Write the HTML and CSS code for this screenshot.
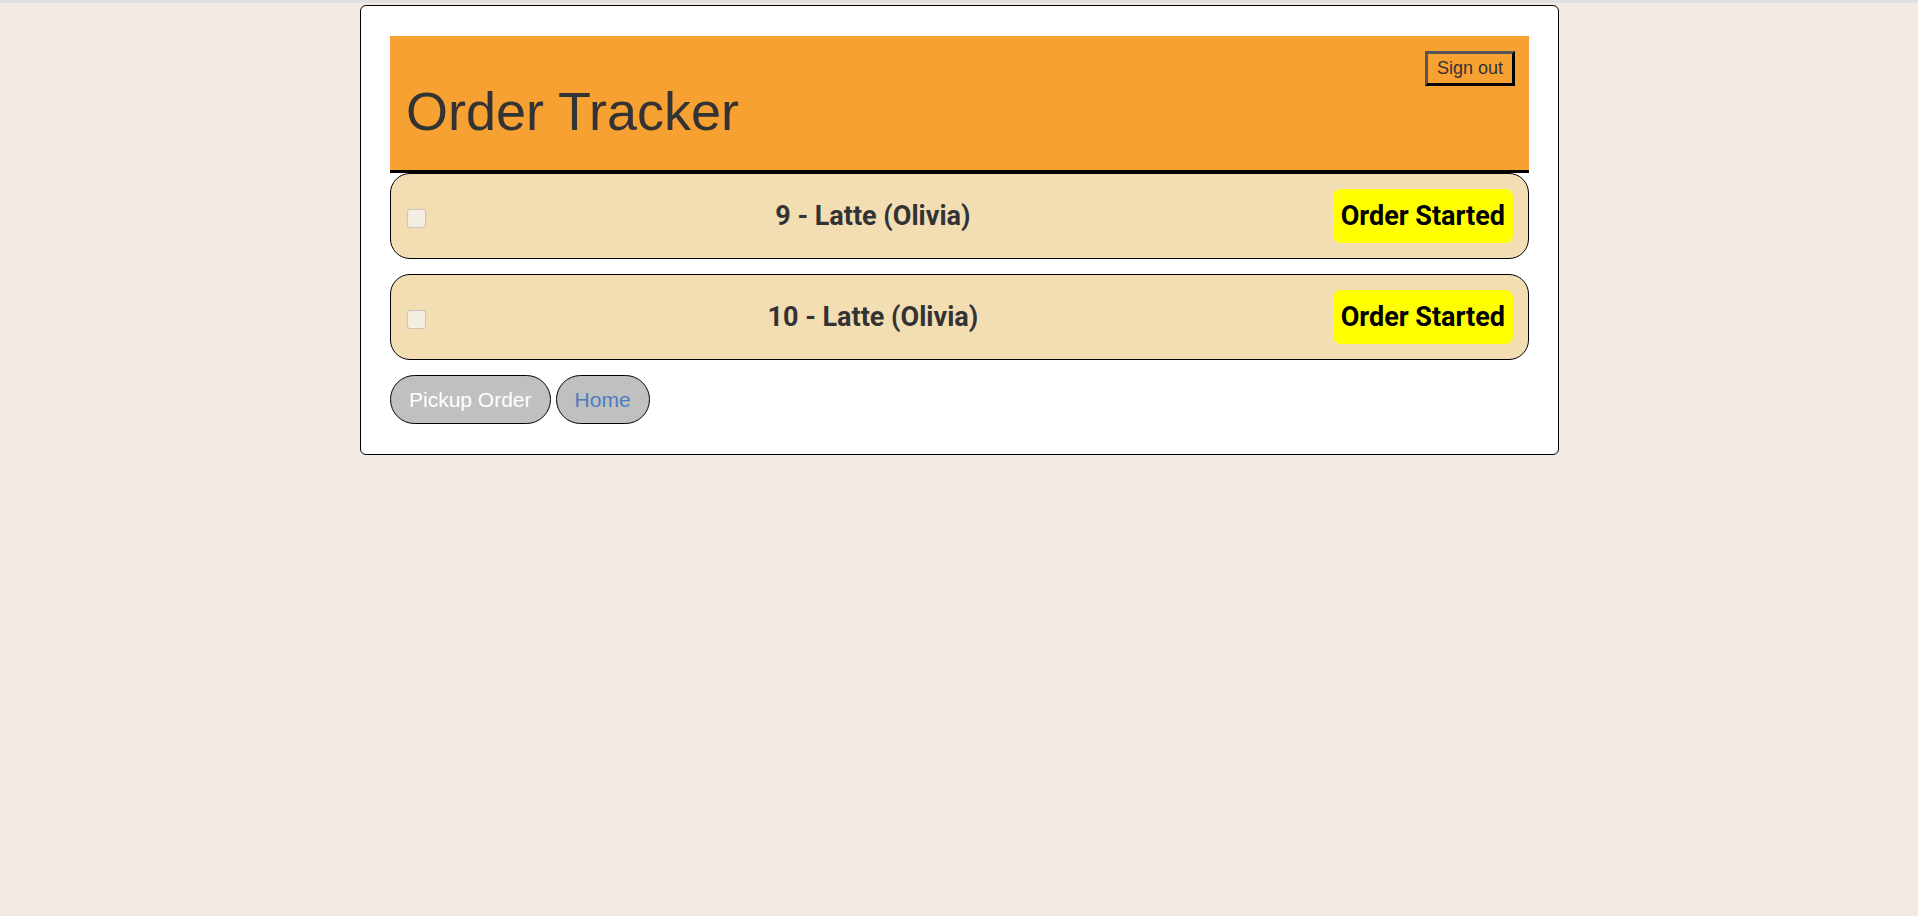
FILE: index.html
```html
<!DOCTYPE html>
<html lang="en">
<head>
<meta charset="utf-8">
<title>Order Tracker</title>
<link rel="stylesheet" href="styles.css">
</head>
<body>
<div class="topbar"></div>
<main class="card">
  <header class="header">
    <h1 class="title">Order Tracker</h1>
    <button class="signout" type="button">Sign out</button>
  </header>
  <ul class="orders">
    <li class="order">
      <span class="check"></span>
      <span class="order-name">9 - Latte (Olivia)</span>
      <span class="status">Order Started</span>
    </li>
    <li class="order">
      <span class="check"></span>
      <span class="order-name">10 - Latte (Olivia)</span>
      <span class="status">Order Started</span>
    </li>
  </ul>
  <nav class="actions">
    <button class="pill pill-primary" type="button">Pickup Order</button>
    <a class="pill pill-link" href="#">Home</a>
  </nav>
</main>
</body>
</html>
```

FILE: styles.css
```css
* { box-sizing: border-box; }

html, body {
  margin: 0;
  padding: 0;
}

body {
  background: #f2eae3;
  font-family: "Liberation Sans", Arial, sans-serif;
  color: #333;
  min-height: 916px;
}

.topbar {
  height: 3px;
  background: #e1e1e1;
}

.card {
  width: 1199px;
  margin: 2px auto 0 calc(50% - 599px);
  background: #fff;
  border: 1px solid #000;
  border-radius: 6px;
  padding: 30px 29px 30px 29px;
}

.header {
  display: flex;
  justify-content: space-between;
  align-items: flex-start;
  background: #f8a133;
  border-bottom: 3px solid #000;
  padding: 15px 14px 28px 16px;
}

.title {
  margin: 29px 0 0 0;
  font-family: "Liberation Sans", Arial, sans-serif;
  font-weight: normal;
  font-size: 54px;
  line-height: 62px;
  color: #333;
}

.signout {
  font-family: "Liberation Sans", Arial, sans-serif;
  font-size: 18px;
  line-height: 21px;
  color: #333;
  background: transparent;
  padding: 4px 9px;
  border-style: solid;
  border-width: 3px;
  border-color: #555 #000 #000 #555;
  cursor: pointer;
}

.orders {
  list-style: none;
  margin: 0;
  padding: 0;
  display: flex;
  flex-direction: column;
  gap: 15px;
}

.order {
  display: flex;
  align-items: center;
  background: #f3deb4;
  border: 1px solid #000;
  border-radius: 20px;
  padding: 15px 15px 15px 16px;
}

.check {
  width: 19px;
  height: 19px;
  margin-top: 5px;
  flex: none;
  background: #f3ede3;
  border: 1px solid #cfc7b9;
  border-radius: 3px;
  box-shadow: 0 0 1px rgba(0,0,0,0.15);
}

.order-name {
  flex: 1;
  text-align: center;
  font-family: Roboto, "Liberation Sans", sans-serif;
  font-weight: bold;
  font-size: 27px;
  color: #333;
  padding-right: 13px;
}

.status {
  flex: none;
  background: #ffff00;
  color: #000;
  border-radius: 8px;
  font-family: Roboto, "Liberation Sans", sans-serif;
  font-weight: bold;
  font-size: 27px;
  line-height: 32px;
  padding: 11px 8px;
}

.actions {
  display: flex;
  gap: 5px;
  margin-top: 15px;
}

.pill {
  display: inline-block;
  background: #c0c0c0;
  border: 1px solid #000;
  border-radius: 25px;
  font-family: "Liberation Sans", Arial, sans-serif;
  font-size: 21px;
  line-height: 25px;
  padding: 11px 18px;
  text-decoration: none;
  cursor: pointer;
}

.pill-primary { color: #fff; }
.pill-link { color: #4b7cc0; }
```
